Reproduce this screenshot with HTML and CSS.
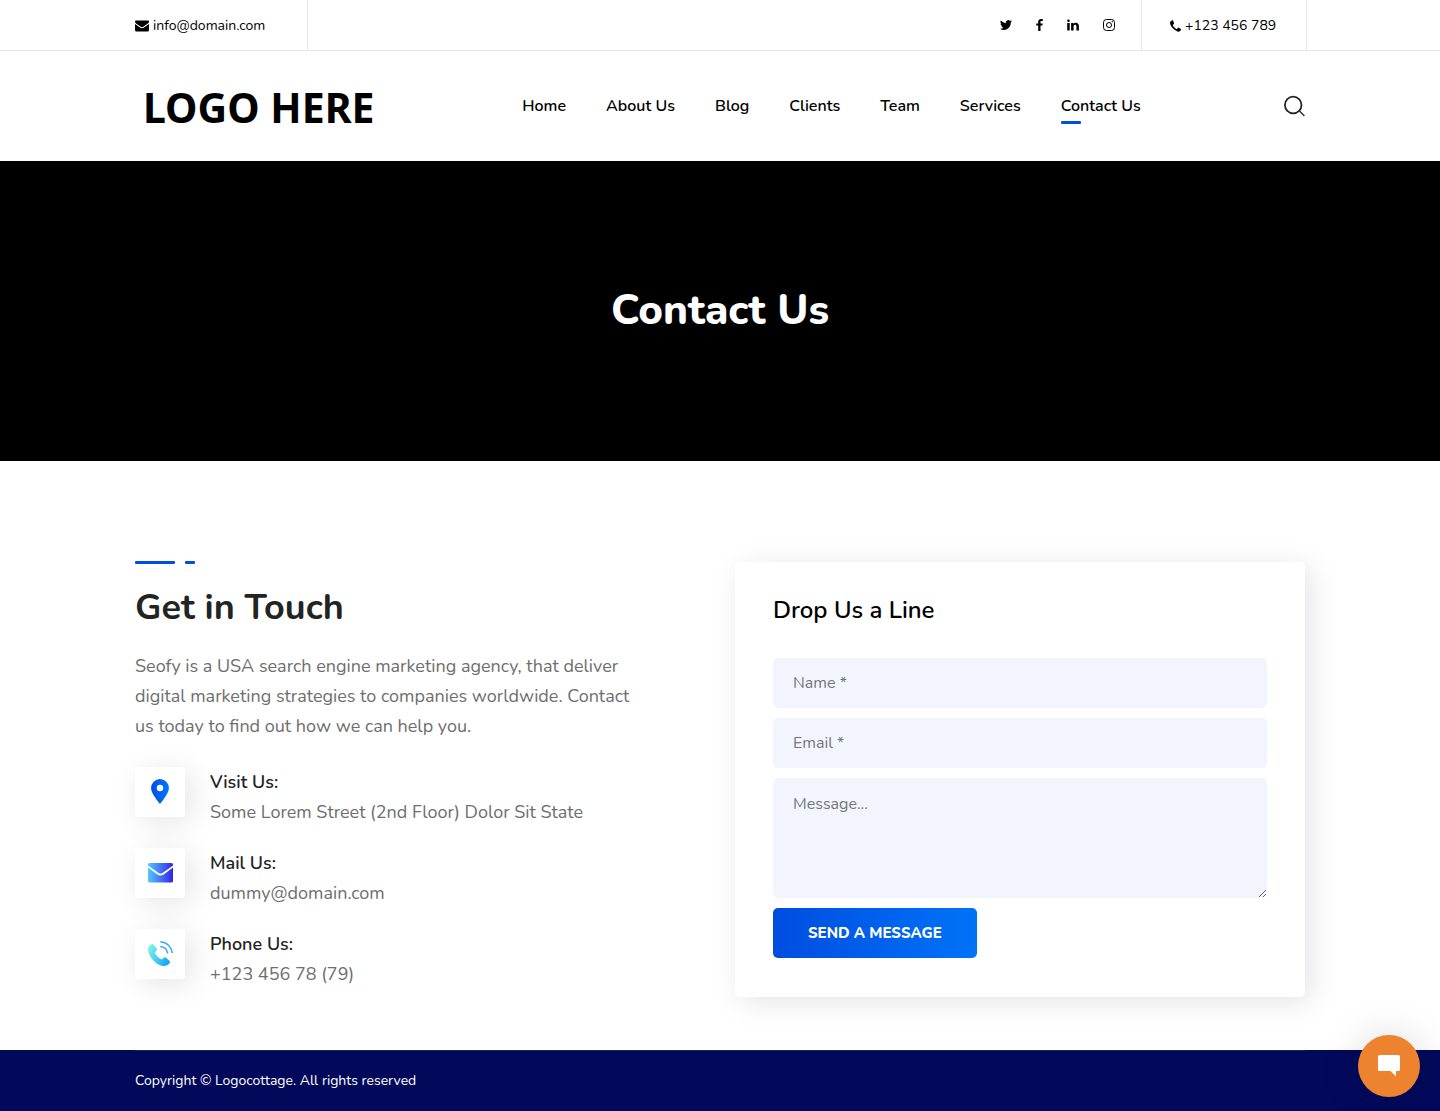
FILE: index.html
```html
<!DOCTYPE html>
<html lang="en">
<head>
    <meta charset="UTF-8">
    <meta name="viewport" content="width=device-width, initial-scale=1.0">
    <title>Contact Us</title>
    <link rel="stylesheet" href="styles.css">
</head>
<body>

<div class="top-bar">
    <div class="container top-bar-inner">
        <a class="top-mail" href="mailto:info@domain.com">
            <svg width="14" height="12" viewBox="0 0 14 12"><path d="M1 0.5h12q1 0 1 1c0 1-.6 1.700-1.400 2.300L8.500 6.600Q7 7.800 5.500 6.600L1.400 3.800C.6 3.200 0 2.500 0 1.500q0-1 1-1zM0 4l5 3.600q2 1.400 4 0L14 4v6q0 1.500-1.500 1.500h-11Q0 11.500 0 10z"/></svg>
            info@domain.com
        </a>
        <div class="top-social">
            <a href="#" aria-label="Twitter"><svg width="12" height="12" viewBox="0 0 24 24"><path d="M24 4.600a10 10 0 0 1-2.800.8 5 5 0 0 0 2.100-2.700 10 10 0 0 1-3.100 1.200 4.900 4.900 0 0 0-8.400 4.500A14 14 0 0 1 1.700 3.200a4.900 4.900 0 0 0 1.500 6.500 5 5 0 0 1-2.200-.6 4.900 4.900 0 0 0 3.900 4.900 5 5 0 0 1-2.200.1 4.900 4.900 0 0 0 4.600 3.400A10 10 0 0 1 0 19.500 14 14 0 0 0 21.500 7.100 10 10 0 0 0 24 4.600z"/></svg></a>
            <a href="#" aria-label="Facebook"><svg width="7" height="12" viewBox="0 0 7 12"><path d="M6.800 0v2H5.600C4.700 2 4.500 2.400 4.500 3v1.400h2.200l-.3 2.100H4.500V12H2.200V6.500H.3V4.400h1.900V2.800C2.200 1 3.300 0 5 0z"/></svg></a>
            <a href="#" aria-label="LinkedIn"><svg width="12" height="12" viewBox="0 0 12 12"><path d="M.2 4h2.500v7.500H.2zM1.500.5a1.300 1.300 0 1 1 0 2.600 1.300 1.300 0 0 1 0-2.600zM4.100 4h2.400v1.100C7 4.300 7.700 3.800 8.900 3.800c1.800 0 3 1.200 3 3.400v4.300H9.400v-4c0-1.100-.4-1.700-1.300-1.700S6.600 6.500 6.600 7.500v4H4.100z"/></svg></a>
            <a href="#" aria-label="Instagram"><svg width="12" height="12" viewBox="0 0 12 12" fill="none" stroke="#000"><rect x=".5" y=".5" width="11" height="11" rx="3"/><circle cx="6" cy="6" r="2.500"/><circle cx="9.200" cy="2.800" r=".3"/></svg></a>
        </div>
        <a class="top-phone" href="tel:+123456789">
            <svg width="11" height="12" viewBox="0 0 11 12"><path d="M2.400.2C1 .5 0 1.700 0 3c0 2 2 4.600 3.700 6.100S7.700 12 8.800 11.700c1.400-.2 2.200-1.300 2.200-2.400 0-.3-.1-.4-.4-.6L8.700 7.700c-.4-.2-.6-.1-.9.200l-.9 1c-.3.300-.5.200-.8 0C4.600 8 3.700 7 2.900 5.600c-.2-.3-.2-.5.1-.8l.8-.7c.3-.3.3-.5.2-.9L3.100.6c-.1-.4-.4-.5-.7-.4z"/></svg>
            +123 456 789
        </a>
    </div>
</div>

<header class="container header">
    <a class="logo" href="#">LOGO HERE</a>
    <nav class="nav">
        <a href="#">Home</a>
        <a href="#">About Us</a>
        <a href="#">Blog</a>
        <a href="#">Clients</a>
        <a href="#">Team</a>
        <a href="#">Services</a>
        <a class="active" href="#">Contact Us</a>
    </nav>
    <button class="search" type="button" aria-label="Search">
        <svg width="22" height="22" viewBox="0 0 22 22" fill="none" stroke="#232323"><circle cx="10.200" cy="10" r="8.300" stroke-width="1.800"/><path d="M16.500 16l4.900 5" stroke-width="1.300"/></svg>
    </button>
</header>

<section class="hero">
    <h1>Contact Us</h1>
</section>

<main class="container contact">
    <div class="info">
        <div class="dashes"><span></span><span></span></div>
        <h2>Get in Touch</h2>
        <p class="intro">Seofy is a USA search engine marketing agency, that deliver digital marketing strategies to companies worldwide. Contact us today to find out how we can help you.</p>

        <div class="info-item">
            <div class="info-icon">
                <svg width="26" height="26" viewBox="0 0 26 26">
                    <defs><linearGradient id="pin"><stop stop-color="#0050e0"/><stop offset="1" stop-color="#0078ff"/></linearGradient></defs>
                    <path fill="url(#pin)" fill-rule="evenodd" d="M13 0a8.900 8.900 0 0 0-8.900 9c0 5 4.700 10.500 8.900 16 4.200-5.500 8.900-11 8.900-16A8.900 8.900 0 0 0 13 0zm0 5.800a3.200 3.200 0 1 1 0 6.400 3.200 3.200 0 0 1 0-6.400z"/>
                </svg>
            </div>
            <div>
                <h3>Visit Us:</h3>
                <p>Some Lorem Street (2nd Floor) Dolor Sit State</p>
            </div>
        </div>
        <div class="info-item">
            <div class="info-icon">
                <svg width="26" height="26" viewBox="0 0 26 26">
                    <defs><linearGradient id="mail"><stop stop-color="#54c8ff"/><stop offset="1" stop-color="#3023e8"/></linearGradient></defs>
                    <path fill="url(#mail)" d="M2.500 3h22q1.500 0 1.500 1.500v1L15.500 13q-2 1.300-4 0L1 5.500v-1Q1 3 2.500 3zM1 7.500l9.300 7q3.200 2 6.400 0l9.300-7V21q0 1.500-1.500 1.500h-22Q1 22.500 1 21z"/>
                </svg>
            </div>
            <div>
                <h3>Mail Us:</h3>
                <p>dummy@domain.com</p>
            </div>
        </div>
        <div class="info-item">
            <div class="info-icon">
                <svg width="26" height="26" viewBox="0 0 26 26">
                    <defs><linearGradient id="phone" gradientUnits="userSpaceOnUse" x1="0" y1="6" x2="23" y2="18"><stop stop-color="#82fbe5"/><stop offset="1" stop-color="#1ba4fc"/></linearGradient></defs>
                    <path fill="url(#phone)" d="M4.500 3.300C2 4.600.9 6.200 1 8.600c.3 7.400 8.300 16 15.400 16.500 3 .2 5.500-1.300 6.500-3.500.3-.6.100-1.200-.3-1.700l-3.500-3.200c-.7-.6-1.500-.5-2.200.1l-1.700 1.300c-.5.400-1 .4-1.500 0-2.400-1.400-4.200-3.200-5.600-5.600-.3-.5-.2-1 .2-1.500L9.500 9.500c.5-.7.600-1.400.1-2.100L6.700 3.900C6.100 3.200 5.300 2.900 4.500 3.300z"/>
                    <path fill="none" stroke="#35a8f5" stroke-width="1.500" d="M13.300.8C20 1.300 24.500 5.800 25.300 12M13.300 5.500c4 .4 6.700 2.900 7.400 6.900"/>
                </svg>
            </div>
            <div>
                <h3>Phone Us:</h3>
                <p>+123 456 78 (79)</p>
            </div>
        </div>
    </div>

    <form class="form">
        <h2>Drop Us a Line</h2>
        <input type="text" aria-label="Name" placeholder="Name *">
        <input type="email" aria-label="Email" placeholder="Email *">
        <textarea aria-label="Message" placeholder="Message..."></textarea>
        <button type="submit">SEND A MESSAGE</button>
    </form>
</main>

<footer class="footer">
    <div class="container">
        <p>Copyright © Logocottage. All rights reserved</p>
    </div>
</footer>

<button class="chat" type="button" aria-label="Open chat">
    <svg width="22" height="22" viewBox="0 0 22 22"><path fill="#fff" d="M1.500 0h19Q22 0 22 1.500v13q0 1.500-1.500 1.500H18v5.500L12.500 16h-11Q0 16 0 14.500v-13Q0 0 1.500 0z"/></svg>
</button>

</body>
</html>
```
FILE: styles.css
```css
* {
    margin: 0;
    padding: 0;
    box-sizing: border-box;
}

body {
    font-family: Nunito, Lato, sans-serif;
    font-size: 18px;
    line-height: 30px;
    color: #6e6e6e;
    background-color: #fff;
}

a {
    color: #000;
    text-decoration: none;
}

button {
    border: none;
    background: none;
    font-family: inherit;
    cursor: pointer;
}

svg {
    display: block;
}

.container {
    width: 100%;
    max-width: 1170px;
    margin: 0 auto;
}

/* Top bar */
.top-bar {
    border-bottom: 1px solid #e6e6e6;
    font-size: 14px;
}

.top-bar-inner {
    display: flex;
    height: 50px;
}

.top-mail, .top-phone {
    display: flex;
    align-items: center;
    gap: 4px;
    padding-top: 1px;
}

.top-mail {
    width: 173px;
    border-right: 1px solid #e6e6e6;
}

.top-social {
    display: flex;
    align-items: center;
    gap: 24px;
    margin-left: auto;
    padding-right: 26px;
}

.top-phone {
    width: 166px;
    margin-right: -2px;
    padding-left: 28px;
    border-left: 1px solid #e6e6e6;
    border-right: 1px solid #e6e6e6;
}

/* Header */
.header {
    display: flex;
    justify-content: space-between;
    align-items: center;
    height: 110px;
}

.logo {
    width: 245px;
    padding: 2px 0 0 8px;
    font-family: "Noto Sans", sans-serif;
    font-size: 41px;
    font-weight: bold;
    white-space: nowrap;
}

.nav {
    display: flex;
    gap: 40px;
    font-size: 16px;
    font-weight: 600;
}

.nav a {
    position: relative;
}

.nav .active::after {
    content: "";
    position: absolute;
    left: 0;
    bottom: -3px;
    width: 20px;
    height: 3px;
    border-radius: 1px;
    background-color: #004fe0;
}

/* Page title */
.hero {
    display: flex;
    justify-content: center;
    align-items: center;
    height: 300px;
    background-color: #000;
}

.hero h1 {
    font-size: 42px;
    line-height: 60px;
    font-weight: 800;
    color: #fff;
}

/* Contact */
.contact {
    display: grid;
    grid-template-columns: 1fr 1fr;
    align-items: start;
    gap: 30px;
    padding: 100px 0 53px;
}

.dashes {
    display: flex;
    gap: 10px;
}

.dashes span {
    width: 40px;
    height: 3px;
    border-radius: 1px;
    background-color: #004fe0;
}

.dashes span:last-child {
    width: 10px;
}

.info h2 {
    margin: 19px 0 18px;
    font-size: 36px;
    line-height: 50px;
    font-weight: bold;
    color: #232323;
}

.intro {
    max-width: 500px;
    margin-bottom: 26px;
}

.info-item {
    display: flex;
    gap: 25px;
    margin-bottom: 21px;
}

.info-item:last-child {
    margin-bottom: 0;
}

.info-icon {
    display: flex;
    justify-content: center;
    align-items: center;
    flex-shrink: 0;
    width: 50px;
    height: 50px;
    border-radius: 3px;
    background-color: #fff;
    box-shadow: 6px 5px 30px rgba(0, 0, 40, 0.11);
}

.info h3 {
    font-size: 18px;
    font-weight: 600;
    color: #232323;
}

.form {
    display: flex;
    flex-direction: column;
    align-items: flex-start;
    gap: 10px;
    margin-top: 1px;
    padding: 30px 38px 39px;
    border-radius: 5px;
    background-color: #fff;
    box-shadow: 6px 5px 30px rgba(0, 0, 40, 0.11);
}

.form h2 {
    margin-bottom: 20px;
    font-size: 24px;
    line-height: 36px;
    font-weight: 600;
    color: #000;
}

.form input, .form textarea {
    width: 100%;
    height: 50px;
    padding: 10px 20px;
    border: none;
    border-radius: 5px;
    background-color: #f2f5fe;
    font-family: inherit;
    font-size: 16px;
    line-height: 30px;
}

.form textarea {
    height: 120px;
    padding-top: 11px;
    resize: vertical;
}

.form input::placeholder, .form textarea::placeholder {
    color: #757575;
}

.form button {
    height: 50px;
    padding: 0 35px;
    border-radius: 5px;
    background: linear-gradient(to right, #004de0, #0073f7);
    font-size: 15px;
    font-weight: 800;
    color: #fff;
}

/* Footer */
.footer {
    background-color: #02095b;
    font-size: 14px;
    color: #fff;
}

.footer .container {
    padding: 15px 0;
    border-top: 1px solid #1b2269;
}

.chat {
    position: fixed;
    right: 20px;
    bottom: 14px;
    display: flex;
    justify-content: center;
    align-items: center;
    width: 62px;
    height: 62px;
    border-radius: 50%;
    background-color: #ee832f;
    box-shadow: 0 0 40px rgba(0, 0, 0, 0.15);
}
```
